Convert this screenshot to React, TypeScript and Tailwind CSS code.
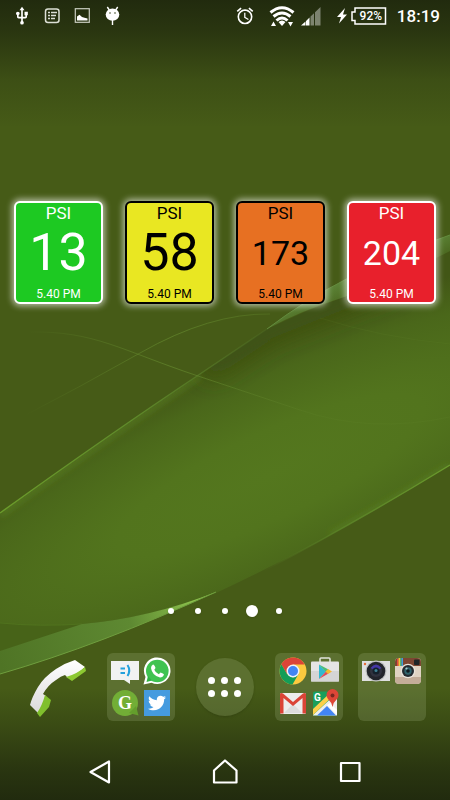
import type { ReactNode } from "react";
import clsx from "clsx";
import { FaTwitter } from "react-icons/fa";
import { MdOutlineAlarm, MdUsb } from "react-icons/md";

type Widget = {
  value: number;
  time: string;
  className: string;
};

const widgets: Widget[] = [
  { value: 13, time: "5.40 PM", className: "bg-[#1dc922] border-white text-white" },
  { value: 58, time: "5.40 PM", className: "bg-[#e9e722] border-black text-black" },
  { value: 173, time: "5.40 PM", className: "bg-[#e77022] border-black text-black" },
  { value: 204, time: "5.40 PM", className: "bg-[#e8202c] border-white text-white" },
];

const pages = [1, 2, 3, 4, 5];
const activePage = 4;

const Wallpaper = () => (
  <svg
    viewBox="0 0 450 800"
    preserveAspectRatio="none"
    className="absolute inset-0 -z-10 h-full w-full"
    aria-hidden="true"
  >
    <defs>
      <radialGradient
        id="bandGlow"
        gradientUnits="userSpaceOnUse"
        cx="0"
        cy="0"
        r="1"
        gradientTransform="translate(270 475) rotate(-25) scale(480 122)"
      >
        <stop offset="0" stopColor="#54771e" />
        <stop offset="0.35" stopColor="#52741d" />
        <stop offset="0.75" stopColor="#4a671a" />
        <stop offset="1" stopColor="#425616" />
      </radialGradient>
      <linearGradient id="shade" x1="0" y1="0" x2="0" y2="1">
        <stop offset="0" stopColor="#10140a" stopOpacity="0.68" />
        <stop offset="0.04" stopColor="#10140a" stopOpacity="0.52" />
        <stop offset="0.1" stopColor="#10140a" stopOpacity="0.17" />
        <stop offset="0.16" stopColor="#10140a" stopOpacity="0" />
        <stop offset="0.86" stopColor="#10140a" stopOpacity="0" />
        <stop offset="0.91" stopColor="#10140a" stopOpacity="0.24" />
        <stop offset="0.96" stopColor="#10140a" stopOpacity="0.52" />
        <stop offset="1" stopColor="#10140a" stopOpacity="0.68" />
      </linearGradient>
      <linearGradient id="upperEdge" gradientUnits="userSpaceOnUse" x1="0" y1="513" x2="267" y2="329">
        <stop offset="0" stopColor="#6b9c2b" />
        <stop offset="0.5" stopColor="#5f8a2a" />
        <stop offset="1" stopColor="#55772a" stopOpacity="0.3" />
      </linearGradient>
      <linearGradient id="lowerEdge" gradientUnits="userSpaceOnUse" x1="450" y1="465" x2="262" y2="572">
        <stop offset="0" stopColor="#6b9c2d" />
        <stop offset="0.5" stopColor="#5f8a2b" stopOpacity="0.7" />
        <stop offset="1" stopColor="#5f8a2b" stopOpacity="0" />
      </linearGradient>
      <linearGradient id="ribbon" gradientUnits="userSpaceOnUse" x1="350" y1="276" x2="360" y2="297">
        <stop offset="0" stopColor="#5d8538" />
        <stop offset="1" stopColor="#4a661e" />
      </linearGradient>
      <linearGradient id="leaf" gradientUnits="userSpaceOnUse" x1="0" y1="664" x2="216" y2="592">
        <stop offset="0" stopColor="#4f7425" />
        <stop offset="0.6" stopColor="#5e8932" />
        <stop offset="1" stopColor="#9bd455" />
      </linearGradient>
      <linearGradient id="curve" gradientUnits="userSpaceOnUse" x1="25" y1="0" x2="320" y2="0">
        <stop offset="0" stopColor="#64882d" stopOpacity="0" />
        <stop offset="0.5" stopColor="#64882d" stopOpacity="0.7" />
        <stop offset="1" stopColor="#64882d" stopOpacity="0.15" />
      </linearGradient>
      <filter id="soft" x="-10%" y="-10%" width="120%" height="120%">
        <feGaussianBlur stdDeviation="3" />
      </filter>
      <filter id="dim" x="-50%" y="-50%" width="200%" height="200%">
        <feGaussianBlur stdDeviation="12" />
      </filter>
      <clipPath id="bandClip">
        <path d="M0 513 Q110 434 200 374 L267 329 L307 311 L347 296 L450 251 V465 Q330 540 216 593 Q150 618 82 624 L0 651Z" />
      </clipPath>
    </defs>
    <rect width="450" height="800" fill="#465b17" />
    <g clipPath="url(#bandClip)">
      <rect width="450" height="800" fill="url(#bandGlow)" />
      <path d="M205 370L267 329 350 296 400 278" stroke="#3d4f15" strokeOpacity="0.7" strokeWidth="22" fill="none" filter="url(#dim)" />
      <path d="M0 515 Q110 436 200 376" stroke="#689a2a" strokeOpacity="0.45" strokeWidth="5" fill="none" filter="url(#soft)" />
      <path d="M450 465 Q390 502 330 534" stroke="#689a2a" strokeOpacity="0.4" strokeWidth="4" fill="none" filter="url(#soft)" />
    </g>
    <path d="M0 513 Q110 434 200 374 L267 329" stroke="url(#upperEdge)" strokeWidth="1.4" fill="none" />
    <path d="M450 465 Q355 523 262 572" stroke="url(#lowerEdge)" strokeWidth="1.4" fill="none" />
    <path d="M267 329 Q340 273 450 235 V251 Q400 277 347 296 Q300 311 267 329Z" fill="url(#ribbon)" />
    <path d="M267 329 Q340 273 450 235" stroke="#638b3d" strokeWidth="1" fill="none" />
    <path d="M0 623 Q40 627 82 624 L0 651Z" fill="#476318" />
    <path d="M0 623 Q40 627 82 624" stroke="#557a22" strokeOpacity="0.6" fill="none" />
    <path d="M0 651 L82 624 Q150 618 216 592 Q100 645 0 674Z" fill="url(#leaf)" />
    <path d="M216 592 Q100 645 0 674" stroke="#6f9e3e" strokeWidth="1" fill="none" />
    <path d="M20 418 Q80 387 140 353 Q210 313 270 314" stroke="url(#curve)" fill="none" />
    <path d="M30 332 C95 331 120 350 198 376 L300 410 Q370 434 450 417" stroke="url(#curve)" fill="none" />
    <path d="M320 318 Q380 337 450 344" stroke="#64882d" strokeOpacity="0.15" fill="none" />
    <rect width="450" height="800" fill="url(#shade)" />
  </svg>
);

const StatusBar = () => (
  <header className="flex h-8 items-center justify-between pr-2.5 pl-3 text-white">
    <div className="flex items-center gap-2.5">
      <MdUsb className="size-5" />
      <svg viewBox="0 0 20 20" className="size-5" fill="none" stroke="#dcdfd5">
        <rect x="3.5" y="3" width="13.5" height="13.5" rx="2.5" strokeWidth="1.5" />
        <path d="M6 6.5h2M9 6.5h6M6 9.5h2M9 9.5h5M6 12.5h2M9 12.5h4" strokeWidth="1.6" />
      </svg>
      <svg viewBox="0 0 20 20" className="size-5">
        <rect x="3.3" y="2.7" width="14" height="13.6" fill="none" stroke="#c9cdc0" strokeWidth="1.2" />
        <path d="M5 14.5v-4l2.5-1.7 2.5 2.2 2.5.8 3 .7v2z" fill="#fff" />
      </svg>
      <svg viewBox="0 0 20 20" className="size-5" fill="#fff">
        <path d="M5.3 1l2 3M15.7 1l-2 3M10.5 14v5" stroke="#fff" strokeWidth="1.4" />
        <ellipse cx="10.5" cy="8.6" rx="6.8" ry="6.2" />
        <circle cx="8" cy="7" r="0.8" fill="#38431c" />
        <circle cx="13" cy="7" r="0.8" fill="#38431c" />
      </svg>
    </div>
    <div className="flex items-center">
      <MdOutlineAlarm className="size-5" />
      <svg viewBox="0 0 26 24" className="ml-3.5 h-6 w-[26px]" fill="none" stroke="#fff" strokeWidth="3">
        <path d="M1.5 8.5Q13-1 24.5 8.5M4.500 12.5Q13 5.500 21.500 12.500M7.500 16.500Q13 11.500 18.500 16.500" />
        <path d="M9.500 18Q13 15 16.500 18L13 22Z" fill="#fff" stroke="none" />
        <path d="M2 22h5l-2.500-4.500zM19 18h5l-2.500 4.500z" fill="#fff" stroke="none" />
      </svg>
      <svg viewBox="0 0 20 20" className="ml-1.5 size-5" fill="#fff">
        <path d="M0 19.5L4.5 15.5V19.5zM5 15L8.5 11.5V19.5H5z" />
        <path d="M9.5 10.5L13 7.3V19.5H9.5zM14 6.3L19.5 1V19.5H14z" fillOpacity="0.4" />
      </svg>
      <svg viewBox="0 0 10 16" className="ml-4 h-4 w-2.5" fill="#fff">
        <path d="M8 0L0 9h4l-2 6.5L10 6.500H6z" />
      </svg>
      <div className="relative ml-1 flex h-5 w-9 items-center justify-center">
        <svg viewBox="0 0 36 20" className="absolute inset-0 h-5 w-9" fill="none" stroke="#fff" strokeWidth="1.5">
          <path d="M4 2H34.5V18H4V14.5H1V6H4Z" />
        </svg>
        <span className="pl-1 text-xs font-medium">92%</span>
      </div>
      <time className="ml-2.5 text-[17px] leading-8 font-medium">18:19</time>
    </div>
  </header>
);

const PsiWidget = ({ value, time, className }: Widget) => (
  <article
    className={clsx(
      "flex h-[103px] flex-col items-center rounded-md border-2 shadow-[0_0_6px_2px_rgba(255,255,255,0.6)]",
      className
    )}
  >
    <h2 className="text-[17px] leading-5">PSI</h2>
    <p className={clsx("leading-[60px]", value < 100 ? "text-[52px]" : "text-[34px]")}>{value}</p>
    <p className="mt-auto text-xs leading-4">{time}</p>
  </article>
);

const Folder = ({ label, children }: { label: string; children?: ReactNode }) => (
  <button
    aria-label={label}
    className="grid size-[68px] grid-cols-2 grid-rows-2 gap-1 rounded-md bg-[#c8dcaa]/17 p-1"
  >
    {children}
  </button>
);

const PhoneIcon = () => (
  <svg viewBox="0 0 60 60" className="size-[60px]">
    <defs>
      <linearGradient id="handset" x1="0" y1="0" x2="0" y2="1">
        <stop offset="0" stopColor="#fff" />
        <stop offset="1" stopColor="#dadada" />
      </linearGradient>
    </defs>
    <path
      d="M47 3Q37 6 28 12Q16 20 10 30Q4 40 2 48L10 56Q15 50 18 39L15 37Q20 28 28 23Q33 19 37 18L40 21Q50 17 57 10Z"
      fill="url(#handset)"
    />
    <path d="M57 10L58 14L44 24L38 20Q49 17 57 10Z" fill="#8cc832" />
    <path d="M17 38L23 43L21 50L12 60L9 56Q14 49 17 38Z" fill="#80bf2d" />
  </svg>
);

const MessageIcon = () => (
  <svg viewBox="0 0 28 28" className="size-7">
    <path d="M0 4H28V23H19V27L13 23H0Z" fill="#f1f2f2" />
    <path d="M9.5 11.5h4.5M9.5 16h4.5" stroke="#23a0dc" strokeWidth="1.8" />
    <path d="M16.5 8Q20 13.5 16.5 19" stroke="#23a0dc" strokeWidth="2" fill="none" />
  </svg>
);

const WhatsAppIcon = () => (
  <svg viewBox="0 0 28 28" className="size-7">
    <path d="M0.5 27.5L2.5 20A13.3 13.3 0 1 1 8.5 25.7Z" fill="#fff" />
    <circle cx="14.3" cy="14" r="11.3" fill="#3fc351" />
    <path d="M3.5 25L5 19 9 23.5Z" fill="#2fb443" />
    <path
      d="M10 7.5Q8 8.5 8 11Q9 18.5 17 20.5Q20 20.5 21 17.5Q20.5 16.5 17.5 15.5L15.8 17.2Q12.5 16 11.3 12.8L12.5 11Q11.5 7.5 10 7.5Z"
      fill="#fff"
    />
  </svg>
);

const GIcon = () => (
  <svg viewBox="0 0 28 28" className="size-7">
    <circle cx="14" cy="14" r="13" fill="#72ae36" />
    <path d="M18 24L27.5 26.5 25 17Z" fill="#649e2c" />
    <text x="14" y="20" textAnchor="middle" fontSize="18" fontWeight="bold" fill="#fff" className="font-['Liberation_Serif',serif]">
      G
    </text>
  </svg>
);

const TwitterIcon = () => (
  <span className="m-px flex size-[26px] items-center justify-center bg-[#459bdf]">
    <FaTwitter className="size-[18px] text-white" />
  </span>
);

const ChromeIcon = () => (
  <svg viewBox="0 0 28 28" className="size-7">
    <circle cx="14" cy="14" r="13.5" fill="#fcca3f" />
    <path d="M2.3 7.2A13.5 13.5 0 0 1 25.7 7.5H14L8 17Z" fill="#dc4437" />
    <path d="M2.3 7.2A13.5 13.5 0 0 0 13.5 27.5L19.5 17 14 20.5 8 17Z" fill="#149d58" />
    <circle cx="14" cy="14" r="6.5" fill="#eef3fb" />
    <circle cx="14" cy="14" r="5" fill="#4285f4" />
  </svg>
);

const PlayIcon = () => (
  <svg viewBox="0 0 28 28" className="size-7">
    <path d="M9 5V2Q9 1 10 1H18Q19 1 19 2V5" fill="none" stroke="#dfe2da" strokeWidth="1.6" />
    <rect y="4.5" width="28" height="20" rx="1" fill="#e4e4e4" />
    <rect y="14" width="28" height="10.5" fill="#d5d5d5" />
    <path d="M8 7.5V22L15 14.5Z" fill="#32b8cf" />
    <path d="M8 7.5L17.5 12.5 15 15Z" fill="#4dbd75" />
    <path d="M8 22L15 14.5 17.5 16.5Z" fill="#e14b5a" />
    <path d="M17 12L21 14.5 17 17 14.5 14.5Z" fill="#f5b92e" />
  </svg>
);

const GmailIcon = () => (
  <svg viewBox="0 0 28 28" className="size-7">
    <rect x="1" y="4" width="26" height="21" rx="1.5" fill="#ededed" />
    <path d="M5 24L14 15 23 24Z" fill="#dcdcdc" />
    <path d="M1 5V24.5H4.5V9L14 17 23.5 9V24.5H27V5Q26 3.5 24 4.5L14 13 4 4.5Q2 3.5 1 5Z" fill="#db4437" />
  </svg>
);

const MapsIcon = () => (
  <svg viewBox="0 0 28 28" className="size-7">
    <rect x="2" y="2.5" width="24" height="24" rx="1.5" fill="#1a9f5b" />
    <path d="M2 26L26 4V26.5H2Z" fill="#eee" />
    <path d="M6 26.5L16 17 25 26.5Z" fill="#4285f4" />
    <path d="M2 20L19 4 21 8 2 26Z" fill="#fcd04b" />
    <path d="M16 16L26 26V21L19 14Z" fill="#fff" />
    <text x="3" y="12" fontSize="10" fontWeight="bold" fill="#fff">
      G
    </text>
    <path d="M21.5 18Q20.5 13 17 10A6 6 0 1 1 26 10Q22.5 13 21.5 18Z" fill="#de4637" />
    <circle cx="21.5" cy="6.5" r="2" fill="#7b2720" />
  </svg>
);

const CameraIcon = () => (
  <svg viewBox="0 0 28 28" className="size-7">
    <rect y="4" width="28" height="20" fill="#dedfdf" />
    <circle cx="3" cy="7" r="1.2" fill="#e56b35" />
    <circle cx="14" cy="14" r="10.5" fill="#c1c3c3" />
    <circle cx="14" cy="14" r="9.3" fill="#22242b" />
    <circle cx="14" cy="14" r="6" fill="#30323f" />
    <path d="M8.5 11Q14 4 19.5 11L16 13H12Z" fill="#4537a5" />
    <circle cx="14" cy="14" r="3.5" fill="#14202c" />
    <circle cx="14" cy="13.5" r="1.5" fill="#3e8094" />
  </svg>
);

const InstagramIcon = () => (
  <svg viewBox="0 0 28 28" className="size-7">
    <rect x="1" y="1" width="26" height="26" rx="4" fill="#e0d3c3" />
    <path d="M1 9V5Q1 1 5 1H23Q27 1 27 5V9Z" fill="#7d4632" />
    <path d="M3 2h1.5v7H3z" fill="#e64a3c" />
    <path d="M4.5 1H6v8H4.5z" fill="#f3c63f" />
    <path d="M6 1h1.5v8H6z" fill="#58b86a" />
    <path d="M7.5 1H9v8H7.5z" fill="#3f9cdb" />
    <rect x="20" y="2.5" width="5.5" height="5.5" rx="1" fill="#1f2427" />
    <path d="M1 20H27V23Q27 27 23 27H5Q1 27 1 23Z" fill="#c4ad99" />
    <circle cx="14" cy="14" r="7.3" fill="#e9e3db" />
    <circle cx="14" cy="14" r="6" fill="#252b30" />
    <circle cx="14" cy="14" r="3.7" fill="#31646d" />
    <circle cx="14" cy="14" r="1.8" fill="#101a20" />
    <circle cx="12.5" cy="11.5" r="1.1" fill="#a9c9cd" />
  </svg>
);

const Dock = () => (
  <section className="grid grid-cols-5 place-items-center px-4" aria-label="Dock">
    <button aria-label="Phone">
      <PhoneIcon />
    </button>
    <Folder label="Social">
      <MessageIcon />
      <WhatsAppIcon />
      <GIcon />
      <TwitterIcon />
    </Folder>
    <button
      aria-label="All apps"
      className="grid size-[58px] grid-cols-[repeat(3,7px)] place-content-center gap-1.5 rounded-full bg-[#c8dcaa]/17 shadow-sm"
    >
      {Array.from({ length: 6 }, (_, i) => (
        <span key={i} className="size-[7px] rounded-full bg-white" />
      ))}
    </button>
    <Folder label="Google">
      <ChromeIcon />
      <PlayIcon />
      <GmailIcon />
      <MapsIcon />
    </Folder>
    <Folder label="Camera">
      <CameraIcon />
      <InstagramIcon />
    </Folder>
  </section>
);

const NavBar = () => (
  <nav className="grid h-14 grid-cols-3 place-items-center px-[37px]">
    <button aria-label="Back">
      <svg viewBox="0 0 28 28" className="size-7" fill="none" stroke="#fff" strokeWidth="2.2" strokeLinejoin="round">
        <path d="M4.5 14L23 3.5V24.5Z" />
      </svg>
    </button>
    <button aria-label="Home">
      <svg viewBox="0 0 28 28" className="size-7" fill="none" stroke="#fff" strokeWidth="2.2" strokeLinejoin="round">
        <path d="M3 12.5L14 2.5 25.5 12.5V24.5H3Z" />
      </svg>
    </button>
    <button aria-label="Recent apps">
      <svg viewBox="0 0 28 28" className="size-7" fill="none" stroke="#fff" strokeWidth="2.2" strokeLinejoin="round">
        <rect x="5" y="5" width="18.5" height="18" />
      </svg>
    </button>
  </nav>
);

const App = () => {
  return (
    <div className="relative isolate flex min-h-screen flex-col overflow-hidden font-[Roboto,sans-serif]">
      <Wallpaper />
      <StatusBar />
      <main className="flex flex-1 flex-col pt-[169px]">
        <section className="grid grid-cols-4 gap-[22px] px-3.5" aria-label="PSI readings">
          {widgets.map((widget) => (
            <PsiWidget key={widget.value} {...widget} />
          ))}
        </section>
        <div className="mt-auto mb-9 flex h-3 items-center justify-center gap-[21px]">
          {pages.map((page) => (
            <button
              key={page}
              aria-label={`Page ${page}`}
              className={clsx(
                "rounded-full bg-white shadow-sm",
                page === activePage ? "-mx-[3px] size-3" : "size-1.5"
              )}
            />
          ))}
        </div>
        <Dock />
      </main>
      <footer className="pt-[23px]">
        <NavBar />
      </footer>
    </div>
  );
};

export default App;
